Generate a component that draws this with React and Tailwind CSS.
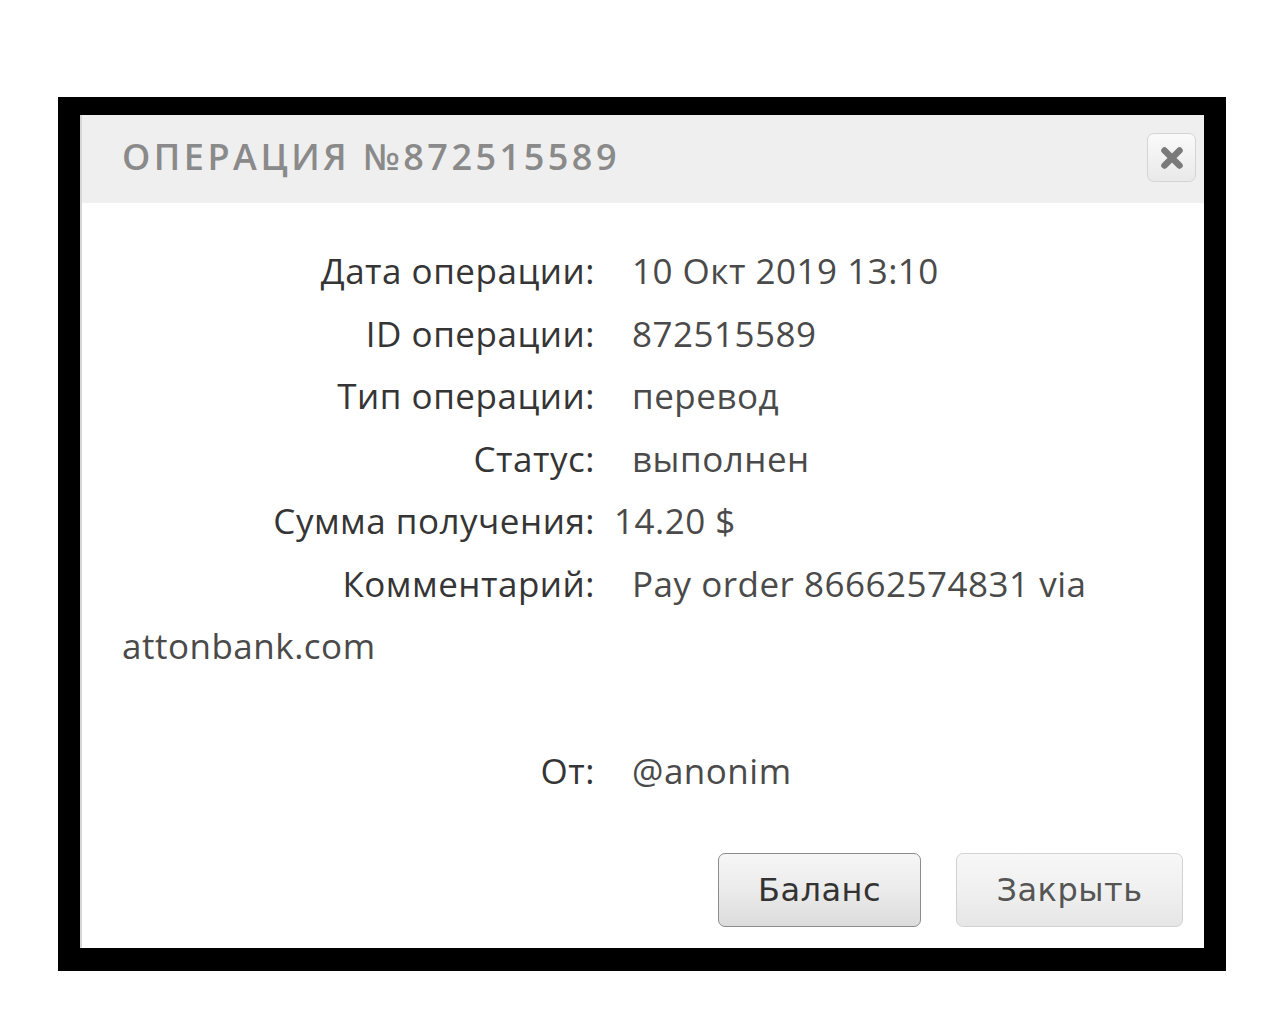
/**
 * App.jsx — operation detail dialog inside a black frame.
 */

const rows = [
  { label: 'Дата операции:', value: '10 Окт 2019 13:10' },
  { label: 'ID операции:', value: '872515589' },
  { label: 'Тип операции:', value: 'перевод' },
  { label: 'Статус:', value: 'выполнен' },
  { label: 'Сумма получения:', value: '14.20 $', tight: true },
  { label: 'Комментарий:', value: 'Pay order 86662574831 via' },
]

function Line({ label, value, tight }) {
  return (
    <div className="h-[62.5px] leading-[62.5px] whitespace-nowrap">
      <span className="inline-block w-[473px] text-right text-[#353535]">{label}</span>
      <span className={`${tight ? 'ml-[19px]' : 'ml-[37px]'} text-[#4a4a4a]`}>{value}</span>
    </div>
  )
}

function Button({ children, primary }) {
  return (
    <button
      className={`h-[74px] rounded-[7px] border text-[32px] tracking-[0.5px] bg-gradient-to-b ${
        primary
          ? 'w-[203px] border-[#8c8c8c] from-[#f6f6f6] via-[#ebebeb] to-[#dcdcdc] text-[#333]'
          : 'w-[227px] border-[#d2d2d2] from-[#f7f7f7] via-[#f0f0f0] to-[#e6e6e6] text-[#555]'
      }`}
      style={{ fontFamily: '"DejaVu Sans", sans-serif' }}
    >
      {children}
    </button>
  )
}

export default function App() {
  return (
    <div className="min-h-[1024px] bg-white pt-[97px] pl-[58px]"
      style={{ fontFamily: '"Open Sans", "Noto Sans", sans-serif' }}>
      <div className="w-[1168px] h-[874px] bg-black pt-[18px] px-[22px] pb-[23px]">
        <div className="h-full bg-white border-l-2 border-[#d6d6d6] flex flex-col">

          {/* Header */}
          <div className="h-[88px] bg-[#efefef] flex items-start justify-between pl-[40px] pr-[8px] shrink-0">
            <h1 className="mt-[20px] text-[36px] leading-[44px] font-semibold tracking-[3.5px] text-[#8a8a8a]">
              ОПЕРАЦИЯ №872515589
            </h1>
            <button className="mt-[18px] w-[49px] h-[49px] rounded-[7px] border border-[#d4d4d4] bg-gradient-to-b from-[#fafafa] to-[#e9e9e9] flex items-center justify-center">
              <svg width="26" height="26" viewBox="0 0 26 26">
                <path d="M5.5 5.5 L20.5 20.5 M20.5 5.5 L5.5 20.5" stroke="#7a7a7a" strokeWidth="6.5" strokeLinecap="round" />
              </svg>
            </button>
          </div>

          {/* Body */}
          <div className="pt-[37px] pl-[40px] text-[35px] tracking-[0.5px]">
            {rows.map((r) => (
              <Line key={r.label} {...r} />
            ))}
            <div className="h-[62.5px] leading-[62.5px] text-[#4a4a4a]">attonbank.com</div>
            <div className="h-[62.5px]" />
            <Line label="От:" value="@anonim" />
          </div>

          {/* Footer */}
          <div className="mt-[50px] flex justify-end gap-[35px] pr-[21px]">
            <Button primary>Баланс</Button>
            <Button>Закрыть</Button>
          </div>
        </div>
      </div>
    </div>
  )
}
